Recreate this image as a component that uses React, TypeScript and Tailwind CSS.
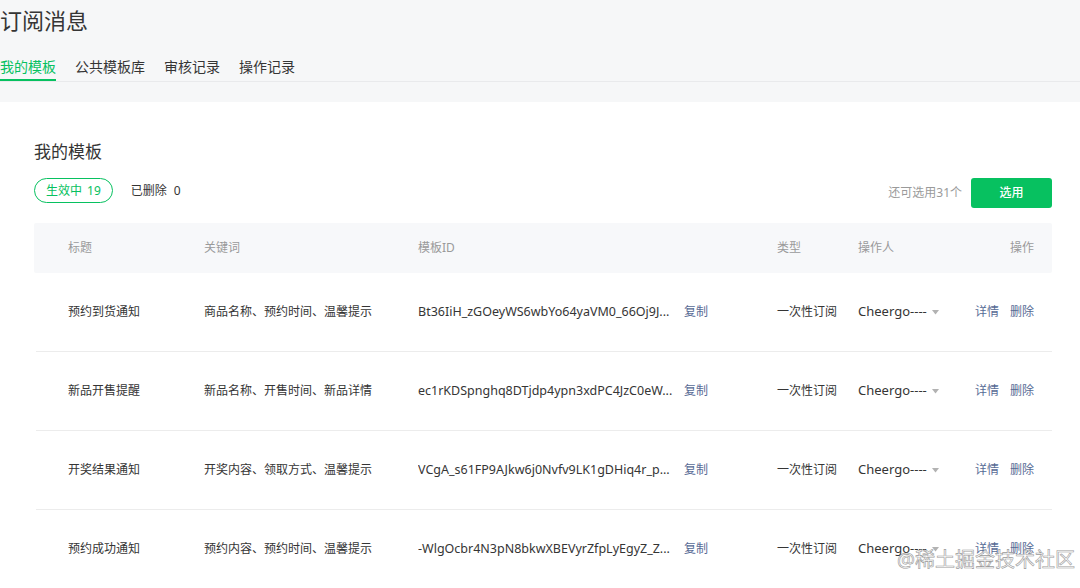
import React from 'react';

const rows = [
  {
    title: '预约到货通知',
    keywords: '商品名称、预约时间、温馨提示',
    id: 'Bt36IiH_zGOeyWS6wbYo64yaVM0_66Oj9J...',
  },
  {
    title: '新品开售提醒',
    keywords: '新品名称、开售时间、新品详情',
    id: 'ec1rKDSpnghq8DTjdp4ypn3xdPC4JzC0eW...',
  },
  {
    title: '开奖结果通知',
    keywords: '开奖内容、领取方式、温馨提示',
    id: 'VCgA_s61FP9AJkw6j0Nvfv9LK1gDHiq4r_p...',
  },
  {
    title: '预约成功通知',
    keywords: '预约内容、预约时间、温馨提示',
    id: '-WlgOcbr4N3pN8bkwXBEVyrZfpLyEgyZ_Z...',
  },
];

const tabs = ['我的模板', '公共模板库', '审核记录', '操作记录'];

const App: React.FC = () => {
  return (
    <div className="relative w-[1080px] h-[588px] overflow-hidden bg-white text-[#353535] font-['Noto_Sans','Noto_Sans_CJK_SC',sans-serif]">
      {/* Header */}
      <div className="bg-[#f6f7f8] h-[102px]">
        <h1 className="text-[22px] leading-[30px] pt-[5px] font-normal text-[#353535]">订阅消息</h1>
        <div className="mt-[22px] flex gap-[19px] border-b border-[#e9eaec] h-[25px]">
          {tabs.map((t, i) => (
            <div
              key={t}
              className={`text-[14px] leading-[20px] h-[24px] ${
                i === 0 ? 'text-[#07c160] border-b-2 border-[#07c160]' : 'text-[#353535]'
              }`}
            >
              {t}
            </div>
          ))}
        </div>
      </div>

      {/* Content */}
      <div className="pl-[34px] pr-[28px] pt-[38px]">
        <h2 className="text-[17px] leading-[24px] font-normal">我的模板</h2>
        <div className="mt-[14px] flex items-start justify-between">
          <div className="flex items-center">
            <span className="h-[25px] px-[11px] rounded-full border border-[#07c160] text-[#07c160] text-[12px] flex items-center gap-[5px]">
              <span>生效中</span>
              <span>19</span>
            </span>
            <span className="ml-[18px] text-[12px] text-[#353535] flex gap-[7px]">
              <span>已删除</span>
              <span>0</span>
            </span>
          </div>
          <div className="flex items-center">
            <span className="text-[12px] text-[#9a9a9a] mr-[9px]">还可选用31个</span>
            <button className="w-[81px] h-[30px] rounded-[3px] bg-[#07c160] text-white text-[12px] font-medium">
              选用
            </button>
          </div>
        </div>

        {/* Table */}
        <div className="mt-[15px]">
          <div className="grid grid-cols-[170px_214px_359px_81px_117px_1fr] items-center h-[50px] bg-[#f7f8fa] rounded-[2px] text-[12px] text-[#9a9a9a]">
            <div className="pl-[34px]">标题</div>
            <div>关键词</div>
            <div>模板ID</div>
            <div>类型</div>
            <div>操作人</div>
            <div className="text-right pr-[18px]">操作</div>
          </div>
          {rows.map((r) => (
            <div
              key={r.title}
              className="grid grid-cols-[168px_214px_359px_81px_117px_1fr] items-center h-[79px] border-b border-[#ececec] ml-[2px] text-[12px]"
            >
              <div className="pl-[32px]">{r.title}</div>
              <div>{r.keywords}</div>
              <div className="flex items-center">
                <span className="w-[266px] whitespace-nowrap overflow-hidden text-[12.5px]">{r.id}</span>
                <span className="text-[#576b95]">复制</span>
              </div>
              <div>一次性订阅</div>
              <div className="flex items-center">
                <span className="text-[13px]">Cheergo----</span>
                <svg width="7" height="5" viewBox="0 0 7 5" className="ml-[5px]">
                  <path d="M0 0h7L3.5 4.5z" fill="#b2b2b2" />
                </svg>
              </div>
              <div className="flex gap-[11px] text-[#576b95]">
                <span>详情</span>
                <span>删除</span>
              </div>
            </div>
          ))}
        </div>
      </div>

      {/* Watermark */}
      <div className="absolute right-[5px] bottom-[16px] text-[20px] leading-[24px] text-white/70 [-webkit-text-stroke:0.6px_#9a9a9a]">
        @稀土掘金技术社区
      </div>
    </div>
  );
};

export default App;
